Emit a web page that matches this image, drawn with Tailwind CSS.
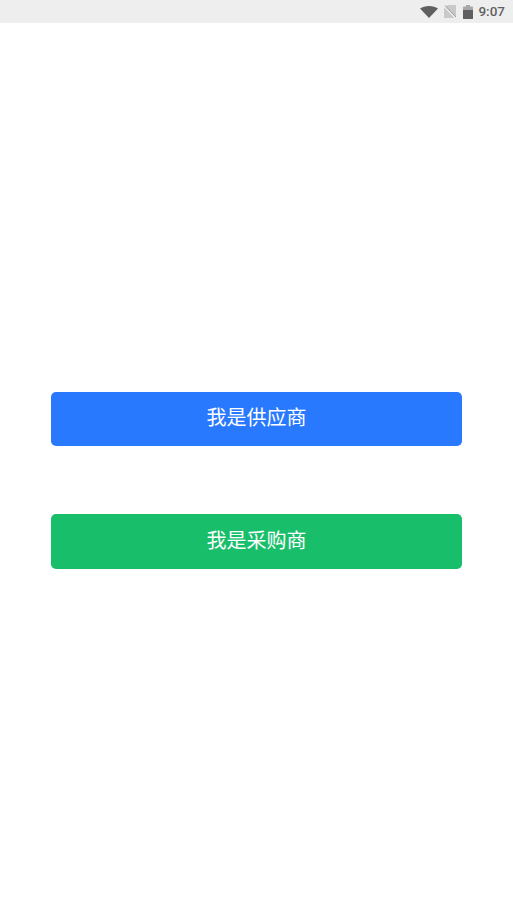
<!DOCTYPE html>
<html lang="zh">
<head>
    <meta charset="UTF-8">
    <meta name="viewport" content="width=device-width, initial-scale=1.0">
    <title>Document</title>
    <script src="https://cdn.jsdelivr.net/npm/@tailwindcss/browser@4"></script>
</head>
<body class="bg-white font-['Roboto','Noto_Sans_CJK_SC',sans-serif]">
    <div class="flex flex-col w-[513px] h-[913px] overflow-hidden">
        <!-- status bar -->
        <div class="flex items-center justify-end h-[23px] bg-[#eeeeee] pr-[8px] shrink-0">
            <svg class="w-[18px] h-[12px] mr-[6px]" viewBox="0 0 18 12">
                <path d="M0 2.6C2.4 .9 5.5 0 9 0s6.6 .9 9 2.6L9 12z" fill="#5f5f5f"/>
            </svg>
            <svg class="w-[12px] h-[13px] mr-[7px]" viewBox="0 0 12 13">
                <path d="M3.5 0H11a1 1 0 0 1 1 1v11a1 1 0 0 1-1 1H1a1 1 0 0 1-1-1V3.5z" fill="#c9c9c9"/>
                <path d="M0.5 1.5L11.5 13" stroke="#eeeeee" stroke-width="1.5"/>
                <path d="M1 0.5L12 12" stroke="#9a9a9a" stroke-width="1"/>
            </svg>
            <svg class="w-[10px] h-[14px] mr-[5px]" viewBox="0 0 10 14">
                <path d="M3 0H7V1.5H9.2a.8 .8 0 0 1 .8 .8V13.2a.8 .8 0 0 1-.8 .8H.8a.8 .8 0 0 1-.8-.8V2.3a.8 .8 0 0 1 .8-.8H3z" fill="#a8a8a8"/>
                <path d="M0 5H10V13.2a.8 .8 0 0 1-.8 .8H.8a.8 .8 0 0 1-.8-.8z" fill="#5f5f5f"/>
            </svg>
            <span class="text-[13.5px] leading-[23px] font-medium text-[#616161]">9:07</span>
        </div>
        <!-- buttons -->
        <div class="flex flex-col gap-[68.5px] px-[51px] pt-[368.8px]">
            <button type="button" class="h-[54.2px] w-[411px] rounded-[5px] bg-[#2979ff] text-[20px] text-white pb-[2px]">我是供应商</button>
            <button type="button" class="h-[54.2px] w-[411px] rounded-[5px] bg-[#19be6b] text-[20px] text-white pb-[2px]">我是采购商</button>
        </div>
    </div>
</body>
</html>
